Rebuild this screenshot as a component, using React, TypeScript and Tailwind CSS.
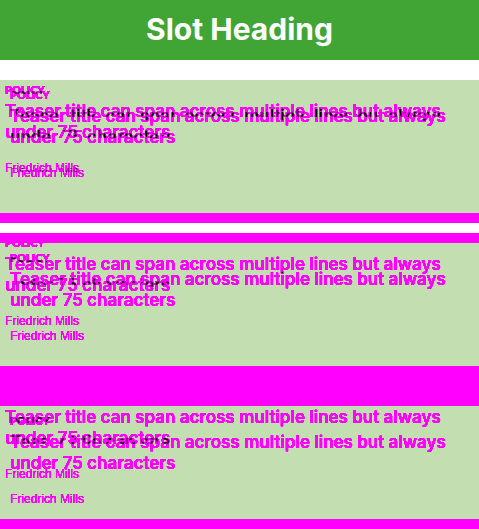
type TeaserProps = {
  category: string;
  title: string;
  author: string;
};

type CardProps = TeaserProps & {
  frame: string;
  ghost: string;
};

const teaser: TeaserProps = {
  category: "POLICY",
  title: "Teaser title can span across multiple lines but always under 75 characters",
  author: "Friedrich Mills",
};

const cards = [
  { frame: "border-b-10 pb-[32px]", ghost: "top-1" },
  { frame: "mt-[10px] border-y-10 pb-[22px]", ghost: "-top-[6px]" },
  { frame: "border-t-30 border-b-10 pb-[12px]", ghost: "-top-4" },
];

function TeaserText({ category, title, author }: TeaserProps) {
  return (
    <>
      <p className="font-['Lato',sans-serif] text-[11px] leading-[12px] font-extrabold">{category}</p>
      <h2 className="mt-[5px] font-['Inter',sans-serif] text-[17px] leading-[21px] font-semibold">{title}</h2>
      <p className="mt-[17px] font-['Liberation_Sans',sans-serif] text-[12px] leading-[16px]">{author}</p>
    </>
  );
}

function Card({ frame, ghost, ...text }: CardProps) {
  return (
    <article className={"border-[#ff00ff] bg-[#c3deb0] " + frame}>
      <div className="relative isolate px-[10px] pt-[9px] text-[#ff00ff] [filter:drop-shadow(0_0_0_#ff00ff)_drop-shadow(0_0_0_#ff00ff)_drop-shadow(0_0_0_#ff00ff)]">
        <div aria-hidden="true" className={"absolute inset-x-[5px] " + ghost}>
          <TeaserText {...text} />
        </div>
        <div className="relative mix-blend-difference">
          <TeaserText {...text} />
        </div>
      </div>
    </article>
  );
}

export default function App() {
  return (
    <main className="bg-white">
      <h1 className="bg-[#40a535] pb-[2px] text-center font-['Inter',sans-serif] text-[30px] leading-[58px] font-bold text-white">
        Slot Heading
      </h1>
      <section className="mt-[20px]">
        {cards.map((card) => (
          <Card key={card.ghost} {...card} {...teaser} />
        ))}
      </section>
    </main>
  );
}
